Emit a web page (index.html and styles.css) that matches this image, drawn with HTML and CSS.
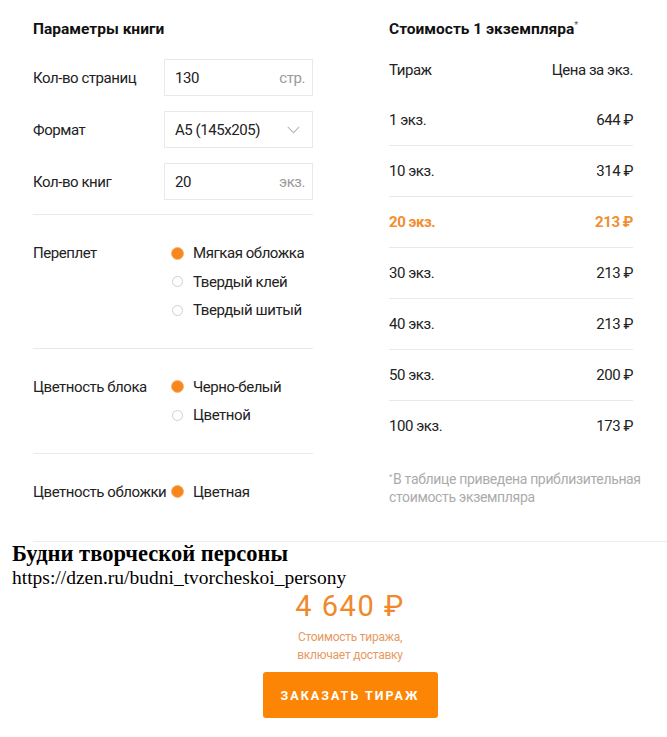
FILE: index.html
```html
<!DOCTYPE html>
<html lang="ru">
<head>
<meta charset="utf-8">
<title>Калькулятор тиража</title>
<link rel="stylesheet" href="styles.css">
</head>
<body>
<div class="calc">
  <section class="params">
    <h2 class="title">Параметры книги</h2>
    <div class="field-row">
      <span class="label">Кол-во страниц</span>
      <div class="input"><span class="val">130</span><span class="unit">стр.</span></div>
    </div>
    <div class="field-row">
      <span class="label">Формат</span>
      <div class="input"><span class="val">A5 (145x205)</span>
        <svg class="chev" width="13" height="8" viewBox="0 0 13 8"><path d="M0.8 0.8 L6.5 6.6 L12.2 0.8" fill="none" stroke="#b9b9b9" stroke-width="1.1"/></svg>
      </div>
    </div>
    <div class="field-row last">
      <span class="label">Кол-во книг</span>
      <div class="input"><span class="val">20</span><span class="unit">экз.</span></div>
    </div>
    <div class="group">
      <span class="label">Переплет</span>
      <div class="options">
        <div class="opt"><span class="radio on"></span>Мягкая обложка</div>
        <div class="opt"><span class="radio"></span>Твердый клей</div>
        <div class="opt"><span class="radio"></span>Твердый шитый</div>
      </div>
    </div>
    <div class="group">
      <span class="label">Цветность блока</span>
      <div class="options">
        <div class="opt"><span class="radio on"></span>Черно-белый</div>
        <div class="opt"><span class="radio"></span>Цветной</div>
      </div>
    </div>
    <div class="group final">
      <span class="label">Цветность обложки</span>
      <div class="options">
        <div class="opt"><span class="radio on"></span>Цветная</div>
      </div>
    </div>
  </section>
  <section class="prices">
    <h2 class="title">Стоимость 1 экземпляра<sup>*</sup></h2>
    <div class="thead"><span>Тираж</span><span>Цена за экз.</span></div>
    <div class="trow"><span>1 экз.</span><span>644 ₽</span></div>
    <div class="trow"><span>10 экз.</span><span>314 ₽</span></div>
    <div class="trow active"><span>20 экз.</span><span>213 ₽</span></div>
    <div class="trow"><span>30 экз.</span><span>213 ₽</span></div>
    <div class="trow"><span>40 экз.</span><span>213 ₽</span></div>
    <div class="trow"><span>50 экз.</span><span>200 ₽</span></div>
    <div class="trow nob"><span>100 экз.</span><span>173 ₽</span></div>
    <p class="note"><sup>*</sup>В таблице приведена приблизительная<br>стоимость экземпляра</p>
  </section>
</div>
<div class="total">
  <div class="promo"><b class="promo-title">Будни творческой персоны</b><br>https://dzen.ru/budni_tvorcheskoi_persony</div>
  <div class="sum">4 640 ₽</div>
  <div class="sum-note">Стоимость тиража,<br>включает доставку</div>
  <button class="order">ЗАКАЗАТЬ ТИРАЖ</button>
</div>
</body>
</html>
```

FILE: styles.css
```css
html, body {
  margin: 0;
  padding: 0;
  background: #fff;
}
body {
  font-family: Roboto, "Noto Sans", sans-serif;
  font-size: 15px;
  letter-spacing: -0.45px;
  color: #222;
}
.calc {
  display: flex;
  align-items: flex-start;
  gap: 76px;
  padding: 19px 0 35px 33px;
}
.params {
  width: 280px;
}
.prices {
  width: 244px;
}
.title {
  margin: 0;
  font-size: 15.5px;
  font-weight: 700;
  line-height: 20px;
  letter-spacing: 0;
  color: #111;
}
.title sup {
  font-size: 9px;
  font-weight: 400;
  color: #555;
  vertical-align: 6px;
  line-height: 0;
}
.params .title {
  margin-bottom: 20px;
}
.field-row {
  display: flex;
  align-items: center;
  height: 37px;
  margin-bottom: 15px;
}
.field-row.last {
  margin-bottom: 14px;
}
.label {
  width: 131px;
  flex: none;
  white-space: nowrap;
}
.input {
  flex: 1;
  height: 37px;
  box-sizing: border-box;
  border: 1px solid #e9e9e9;
  display: flex;
  align-items: center;
  justify-content: space-between;
  padding: 0 7px 0 10px;
}
.unit {
  color: #9a9a9a;
}
.chev {
  margin-right: 5px;
}
.group {
  display: flex;
  border-top: 1px solid #e9e9e9;
  padding: 24px 0 23px;
  line-height: 28.5px;
}
.group.final {
  padding-bottom: 0;
}
.options {
  display: flex;
  flex-direction: column;
}
.opt {
  display: flex;
  align-items: center;
  padding-left: 8px;
  white-space: nowrap;
}
.radio {
  width: 11px;
  height: 11px;
  border-radius: 50%;
  border: 1px solid #cfcfcf;
  margin-right: 10px;
  box-sizing: border-box;
  flex: none;
}
.radio.on {
  width: 13px;
  height: 13px;
  margin-left: -1px;
  margin-right: 9px;
  border: 1.5px solid #fbb36b;
  background: #f7861c;
}
.thead, .trow {
  display: flex;
  justify-content: space-between;
  align-items: center;
  height: 50px;
}
.thead {
  margin-top: 6px;
}
.trow {
  border-bottom: 1px solid #e9e9e9;
}
.trow.nob {
  border-bottom: none;
}
.trow.active {
  color: #f18e2e;
  font-weight: 700;
}
.note {
  margin: 19px -20px 0 0;
  font-size: 14px;
  line-height: 18px;
  letter-spacing: -0.35px;
  color: #ababab;
  white-space: nowrap;
}
.note sup {
  font-size: 8px;
  vertical-align: 5px;
  line-height: 0;
  margin-right: 1px;
}
.total {
  margin-left: 33px;
  border-top: 1px solid #ececec;
  display: flex;
  flex-direction: column;
  align-items: center;
}
.promo {
  align-self: flex-start;
  margin-left: -21px;
  font-family: "Liberation Serif", "Times New Roman", serif;
  font-size: 19.5px;
  line-height: 23px;
  letter-spacing: 0;
  color: #000;
}
.promo-title {
  font-size: 22.5px;
}
.sum {
  font-size: 29px;
  line-height: 34px;
  letter-spacing: 1.5px;
  color: #f0892a;
}
.sum-note {
  margin-top: 5px;
  font-size: 12px;
  line-height: 18px;
  letter-spacing: -0.25px;
  color: #e69a63;
  text-align: center;
}
.order {
  margin-top: 8px;
  width: 175px;
  height: 46px;
  border: none;
  border-radius: 3px;
  background: #fd8506;
  color: #fff;
  font-family: Roboto, "Noto Sans", sans-serif;
  font-size: 12.5px;
  font-weight: 700;
  letter-spacing: 2px;
  padding: 0;
}
```
